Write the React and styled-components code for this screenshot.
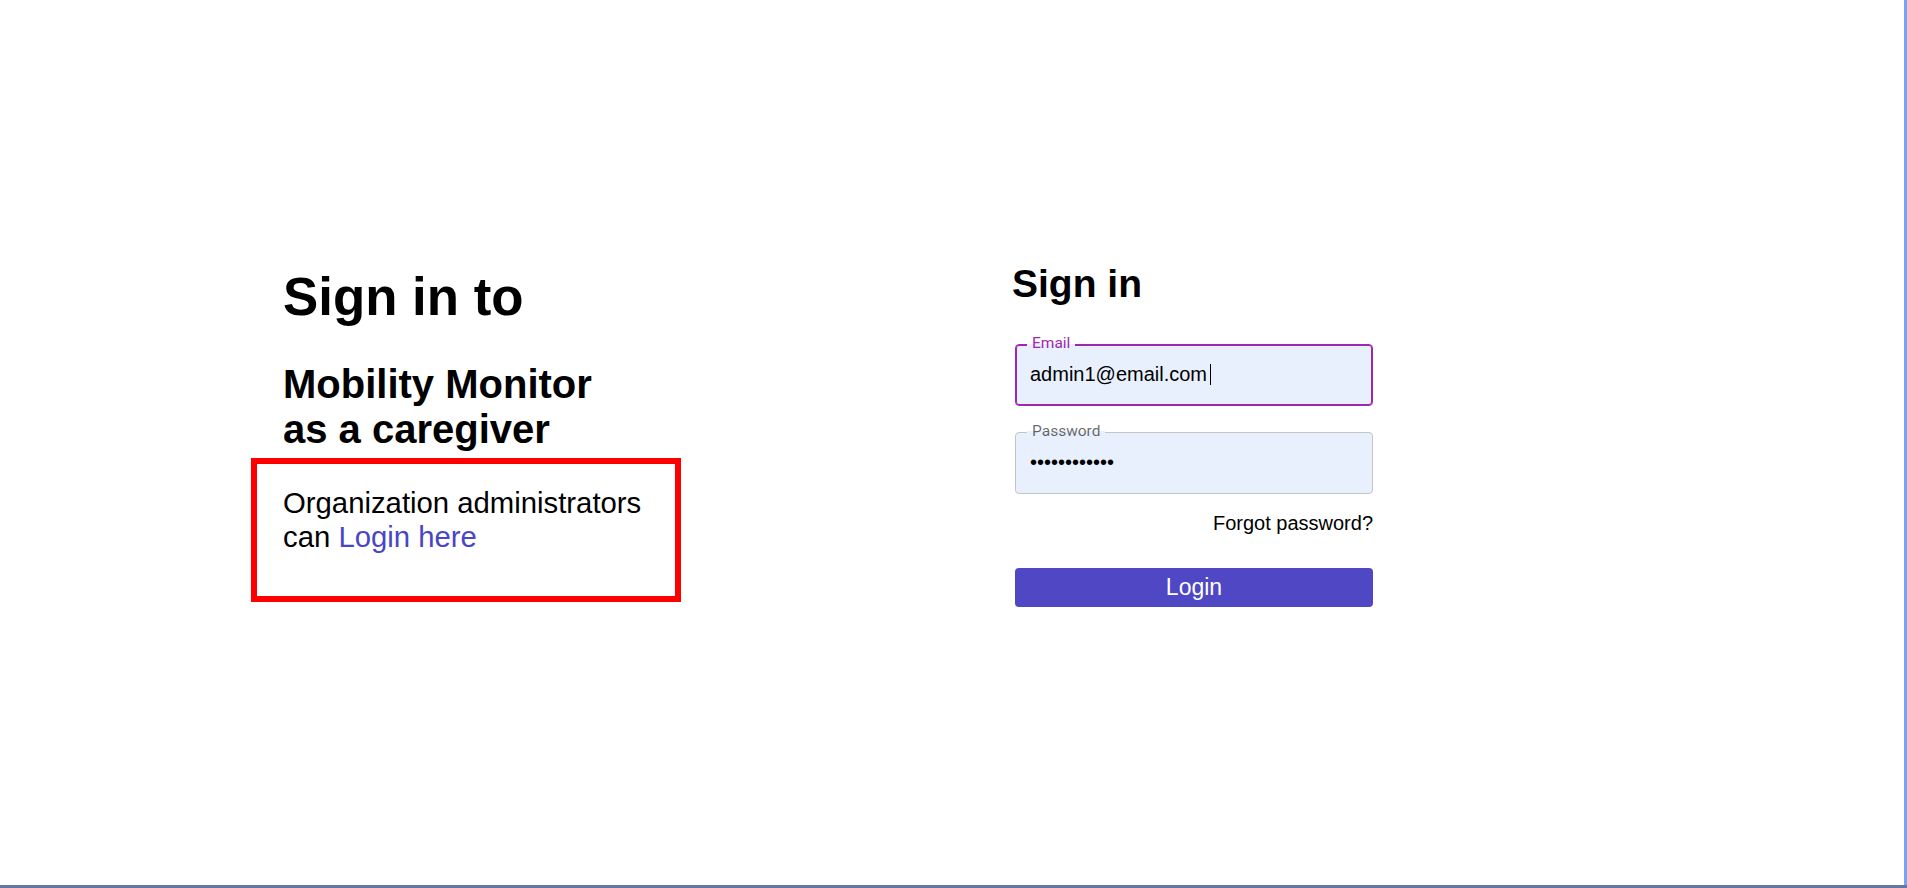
import React from "react";
import styled, { createGlobalStyle } from "styled-components";

const Global = createGlobalStyle`
  html, body { margin: 0; padding: 0; background: #fff; }
  body { font-family: "Liberation Sans", Arial, sans-serif; color: #000; }
  * { box-sizing: border-box; }
`;

const Frame = styled.div`
  height: 888px;
  border-bottom: 3px solid #6577a9;
`;

const Page = styled.div`
  height: 100%;
  border-right: 3px solid #76a5f5;
  display: flex;
  align-items: flex-start;
  padding: 262px 0 0 251px;
  gap: 334px;
`;

const LeftCol = styled.section`
  display: flex;
  flex-direction: column;
  padding-top: 4px;
`;

const Title = styled.h1`
  margin: 0 0 0 32px;
  font-size: 52.8px;
  font-weight: 700;
  line-height: normal;
`;

const Subtitle = styled.h2`
  margin: 35px 0 0 32px;
  font-size: 40px;
  font-weight: 700;
  line-height: 45px;
`;

const AdminBox = styled.div`
  margin-top: 6px;
  width: 430px;
  height: 144px;
  border: 6px solid #ff0000;
  padding: 21.5px 20px 0 26px;
  font-size: 29.3px;
  line-height: normal;
`;

const AdminLink = styled.a`
  color: #4845c8;
  text-decoration: none;
`;

const RightCol = styled.form`
  width: 358px;
  display: flex;
  flex-direction: column;
`;

const FormTitle = styled.h2`
  margin: 0 0 0 -3px;
  font-size: 39px;
  font-weight: 700;
  line-height: normal;
`;

const Field = styled.div`
  position: relative;
  height: 62px;
  margin-top: ${(p) => p.$mt}px;
  background: #e8f0fe;
  border-radius: 4px;
  border: 1px solid ${(p) => (p.$focused ? "#9c27b0" : "#c4c4c4")};
  box-shadow: ${(p) => (p.$focused ? "inset 0 0 0 1px #9c27b0" : "none")};
`;

const FieldLabel = styled.label`
  position: absolute;
  left: 11px;
  top: -9.5px;
  padding: 0 5px;
  font-family: Roboto, "Liberation Sans", sans-serif;
  font-size: 15.5px;
  line-height: 17px;
  color: ${(p) => (p.$focused ? "#9c27b0" : "rgba(0,0,0,0.6)")};
  background: linear-gradient(to bottom, #fff 0 50%, #e8f0fe 50% 100%);
`;

const Input = styled.input`
  display: block;
  width: 100%;
  height: 100%;
  border: 0;
  outline: none;
  background: transparent;
  padding: 0 14px;
  font-family: "Liberation Sans", Arial, sans-serif;
  font-size: 20px;
  color: #000;
`;

const Caret = styled.span`
  position: absolute;
  left: 194px;
  top: 19px;
  width: 1px;
  height: 21px;
  background: #000;
`;

const Forgot = styled.a`
  align-self: flex-end;
  margin-top: 18px;
  font-size: 20px;
  line-height: normal;
  color: #000;
  text-decoration: none;
`;

const LoginButton = styled.button`
  margin-top: 33.5px;
  height: 39px;
  border: 0;
  border-radius: 4px;
  background: #4f47c4;
  color: #fff;
  font-family: "Liberation Sans", Arial, sans-serif;
  font-size: 23px;
  line-height: 39px;
  padding: 0;
  cursor: pointer;
`;

export default function App() {
  return (
    <>
      <Global />
      <Frame>
        <Page>
          <LeftCol>
            <Title>Sign in to</Title>
            <Subtitle>
              Mobility Monitor
              <br />
              as a caregiver
            </Subtitle>
            <AdminBox>
              Organization administrators
              <br />
              can <AdminLink href="#">Login here</AdminLink>
            </AdminBox>
          </LeftCol>
          <RightCol onSubmit={(e) => e.preventDefault()}>
            <FormTitle>Sign in</FormTitle>
            <Field $mt={37.5} $focused>
              <FieldLabel $focused htmlFor="email">Email</FieldLabel>
              <Input id="email" type="text" defaultValue="admin1@email.com" />
              <Caret />
            </Field>
            <Field $mt={26}>
              <FieldLabel htmlFor="password">Password</FieldLabel>
              <Input id="password" type="password" defaultValue="passwordpass" />
            </Field>
            <Forgot href="#">Forgot password?</Forgot>
            <LoginButton type="submit">Login</LoginButton>
          </RightCol>
        </Page>
      </Frame>
    </>
  );
}
